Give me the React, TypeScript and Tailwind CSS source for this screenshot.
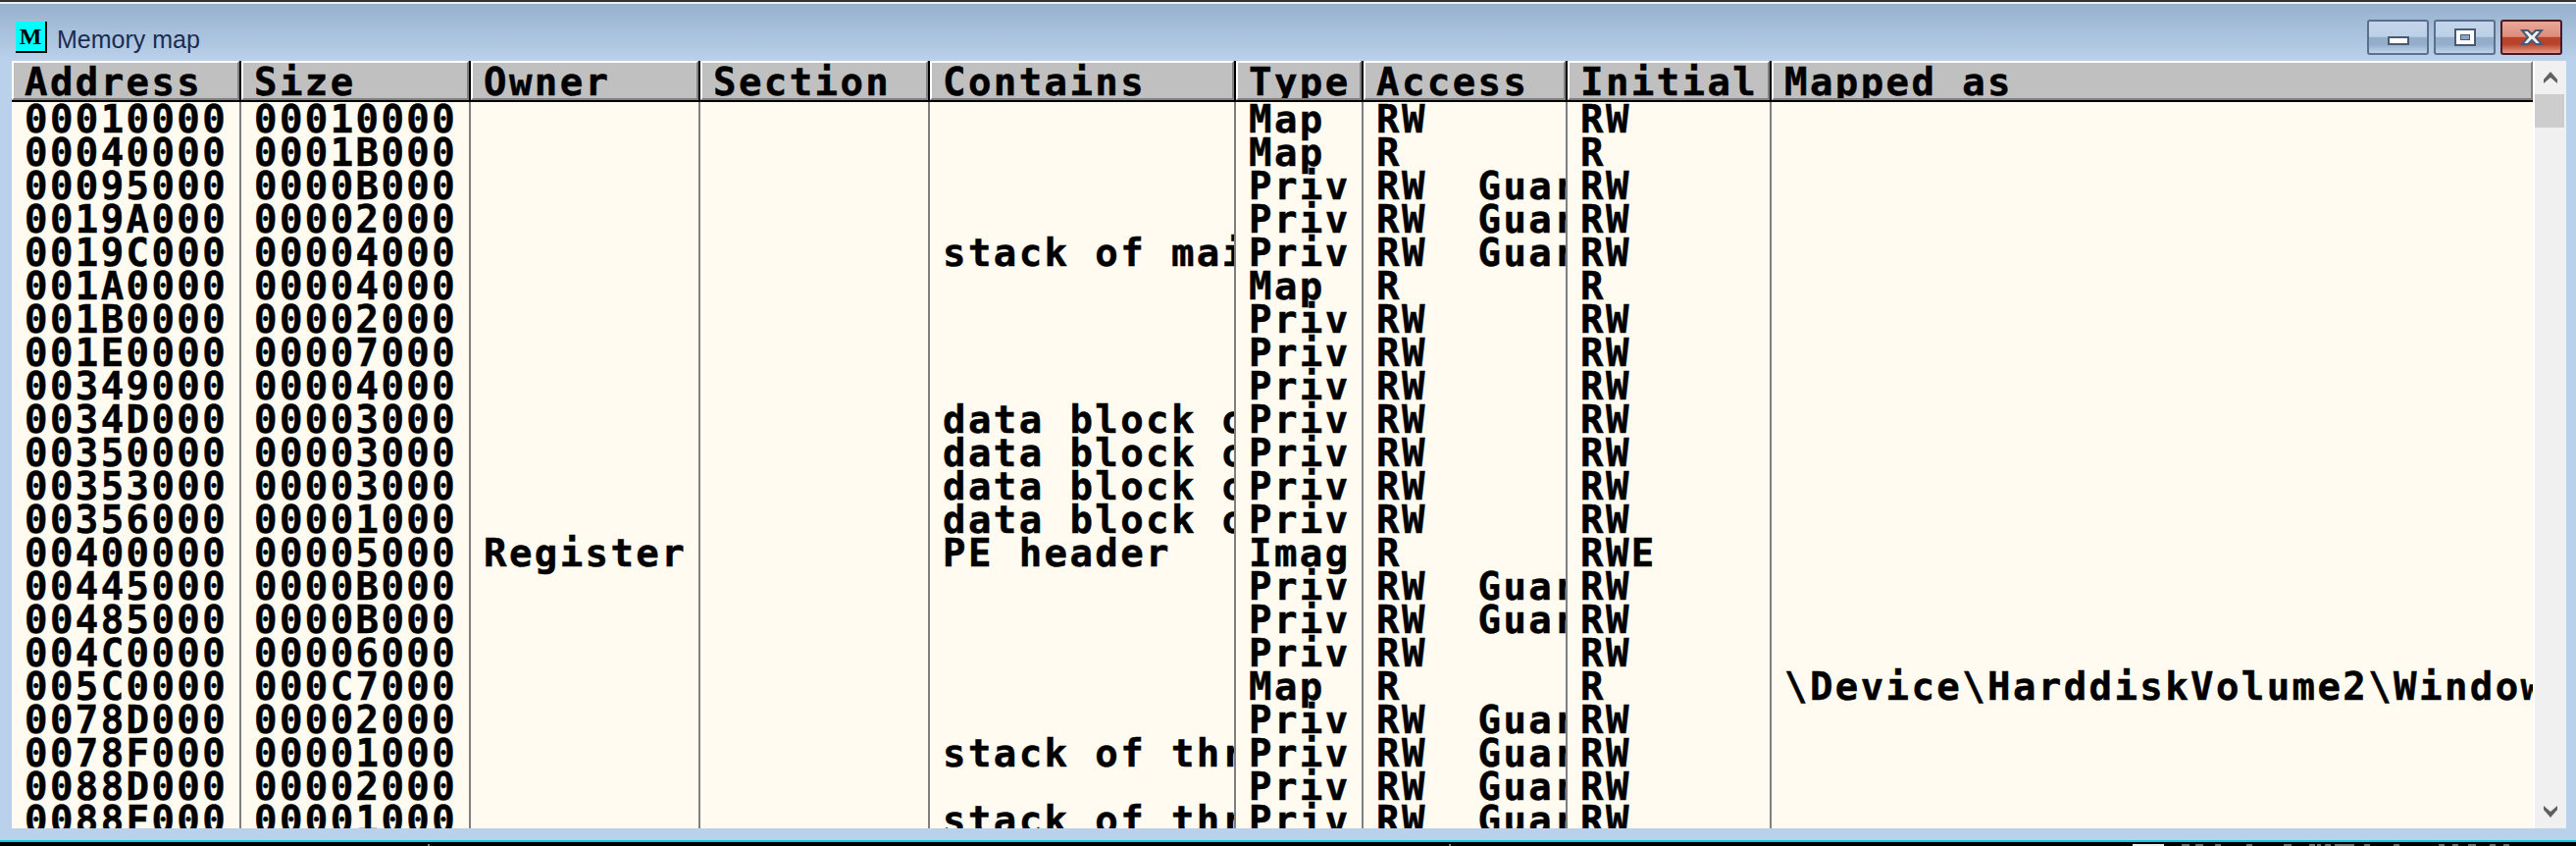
const rows: string[][] = [
  ["00010000", "00010000", "", "", "", "Map", "RW", "RW", ""],
  ["00040000", "0001B000", "", "", "", "Map", "R", "R", ""],
  ["00095000", "0000B000", "", "", "", "Priv", "RW  Guar", "RW", ""],
  ["0019A000", "00002000", "", "", "", "Priv", "RW  Guar", "RW", ""],
  ["0019C000", "00004000", "", "", "stack of mai", "Priv", "RW  Guar", "RW", ""],
  ["001A0000", "00004000", "", "", "", "Map", "R", "R", ""],
  ["001B0000", "00002000", "", "", "", "Priv", "RW", "RW", ""],
  ["001E0000", "00007000", "", "", "", "Priv", "RW", "RW", ""],
  ["00349000", "00004000", "", "", "", "Priv", "RW", "RW", ""],
  ["0034D000", "00003000", "", "", "data block o", "Priv", "RW", "RW", ""],
  ["00350000", "00003000", "", "", "data block o", "Priv", "RW", "RW", ""],
  ["00353000", "00003000", "", "", "data block o", "Priv", "RW", "RW", ""],
  ["00356000", "00001000", "", "", "data block o", "Priv", "RW", "RW", ""],
  ["00400000", "00005000", "Register", "", "PE header", "Imag", "R", "RWE", ""],
  ["00445000", "0000B000", "", "", "", "Priv", "RW  Guar", "RW", ""],
  ["00485000", "0000B000", "", "", "", "Priv", "RW  Guar", "RW", ""],
  ["004C0000", "00006000", "", "", "", "Priv", "RW", "RW", ""],
  ["005C0000", "000C7000", "", "", "", "Map", "R", "R", "\\Device\\HarddiskVolume2\\Windows"],
  ["0078D000", "00002000", "", "", "", "Priv", "RW  Guar", "RW", ""],
  ["0078F000", "00001000", "", "", "stack of thr", "Priv", "RW  Guar", "RW", ""],
  ["0088D000", "00002000", "", "", "", "Priv", "RW  Guar", "RW", ""],
  ["0088F000", "00001000", "", "", "stack of thr", "Priv", "RW  Guar", "RW", ""],
];

const columns = [
  { label: "Address", cls: "w-[234px] shrink-0" },
  { label: "Size", cls: "w-[234px] shrink-0" },
  { label: "Owner", cls: "w-[234px] shrink-0" },
  { label: "Section", cls: "w-[234px] shrink-0" },
  { label: "Contains", cls: "w-[312px] shrink-0" },
  { label: "Type", cls: "w-[130px] shrink-0" },
  { label: "Access", cls: "w-[208px] shrink-0" },
  { label: "Initial", cls: "w-[208px] shrink-0" },
  { label: "Mapped as", cls: "flex-1 min-w-0" },
];

const textClass =
  "font-['DejaVu_Sans_Mono',monospace] font-bold text-[39px] tracking-[2.4px] text-black whitespace-pre [-webkit-text-stroke:0.5px_black]";

const bottomBits = [
  [2224, 8], [2238, 8], [2258, 6], [2290, 6], [2328, 8], [2354, 6], [2362, 4], [2370, 6],
  [2380, 20], [2410, 6], [2440, 6], [2486, 6], [2500, 6], [2516, 8], [2538, 6], [2552, 6],
];

const blueButton =
  "w-[63px] h-[36px] rounded-[3px] border-2 border-[#5c6f8c] bg-[linear-gradient(to_bottom,#c2d5ea_0%,#bcd0e7_48%,#94adca_50%,#94adca_72%,#bcd4ec_100%)] flex items-center justify-center";

export default function App() {
  return (
    <div className="w-[2626px] h-[862px] overflow-hidden flex flex-col bg-black">
      <div className="h-1 bg-[#333333] border-b-2 border-[#e8eef5]" />
      <div className="h-[58px] flex items-center justify-between bg-gradient-to-b from-[#97b0cd] to-[#b9d1ea] pl-4 pr-[14px]">
        <div className="flex items-center gap-2.5 mt-[10px]">
          <div className="w-8 h-8 bg-[#00ffff] border-r-2 border-b-2 border-black flex items-center justify-center font-['Liberation_Serif',serif] font-bold text-[24px] text-black leading-none">
            M
          </div>
          <span className="mt-1 font-['Liberation_Sans',sans-serif] text-[25px] leading-none text-[#1c2c50]">Memory map</span>
        </div>
        <div className="flex items-center gap-[5px] mt-[10px]">
          <div className={blueButton}>
            <div className="w-[22px] h-[9px] mt-[6px] bg-white border-2 border-[#4a5a75]" />
          </div>
          <div className={blueButton}>
            <div className="w-[22px] h-[18px] bg-white border-2 border-[#4a5a75] flex items-center justify-center">
              <div className="w-[10px] h-[6px] bg-[#8fa4c0] border border-[#4a5a75]" />
            </div>
          </div>
          <div className="w-[63px] h-[36px] rounded-[3px] border-2 border-[#4a1a28] bg-[linear-gradient(to_bottom,#eaa898_0%,#dc8c7a_48%,#b8432a_50%,#b8432a_72%,#e59a88_100%)] flex items-center justify-center">
            <svg width="24" height="18" viewBox="0 0 24 18">
              <path d="M2 2h6l4 4 4-4h6l-6 7 6 7h-6l-4-4-4 4H2l6-7z" fill="#f2f2f2" stroke="#4a5a75" strokeWidth="2" />
            </svg>
          </div>
        </div>
      </div>
      <div className="h-[782px] flex bg-[#b9d1ea] pl-3 pr-[10px]">
        <div className="flex-1 min-w-0 flex flex-col overflow-hidden">
          <div className="h-[42px] shrink-0 flex border-b-2 border-black bg-[#c0c0c0]">
            {columns.map((c) => (
              <div key={c.label} className={`${c.cls} h-full border-r-2 border-black last:border-r-0`}>
                <div
                  className={`h-full border-t-2 border-l-2 border-t-white border-l-white border-r-2 border-b-2 border-r-[#808080] border-b-[#808080] pl-[11px] flex items-center overflow-hidden ${textClass}`}
                >
                  <span className="leading-none mt-[2px]">{c.label}</span>
                </div>
              </div>
            ))}
          </div>
          <div className="flex-1 flex overflow-hidden bg-[#fffbf0]">
            {columns.map((c, col) => (
              <div key={c.label} className={`${c.cls} h-full border-r-2 border-[#808080] last:border-r-0 overflow-hidden flex flex-col pl-[13px]`}>
                {rows.map((r) => (
                  <div key={r[0]} className={`h-[34px] shrink-0 leading-[36px] ${textClass}`}>
                    {r[col]}
                  </div>
                ))}
              </div>
            ))}
          </div>
        </div>
        <div className="w-[34px] border-l-2 border-white flex flex-col bg-[#f0f0f0]">
          <div className="h-[34px] shrink-0 flex items-center justify-center">
            <svg width="14" height="12" viewBox="0 0 14 12"><path d="M0 12V8l7-8 7 8v4l-7-6z" fill="#606060" /></svg>
          </div>
          <div className="w-[30px] h-[34px] shrink-0 bg-[#cdcdcd]" />
          <div className="flex-1" />
          <div className="h-[34px] shrink-0 flex items-center justify-center">
            <svg width="14" height="12" viewBox="0 0 14 12"><path d="M0 0v4l7 8 7-8V0L7 6z" fill="#606060" /></svg>
          </div>
        </div>
      </div>
      <div className="h-[12px] bg-[#b9d1ea]" />
      <div className="h-[2px] bg-[#1ac4e4]" />
      <div className="flex-1 bg-black flex items-end">
        <svg width="2626" height="2" viewBox="0 0 2626 2" className="block">
          <rect x="436" width="2" height="2" fill="#808080" />
          <rect x="1477" width="2" height="2" fill="#808080" />
          <rect x="2174" width="32" height="2" fill="#f0f0f0" />
          {bottomBits.map(([x, w]) => (
            <rect key={x} x={x} width={w} height="2" fill="#707070" />
          ))}
        </svg>
      </div>
    </div>
  );
}
